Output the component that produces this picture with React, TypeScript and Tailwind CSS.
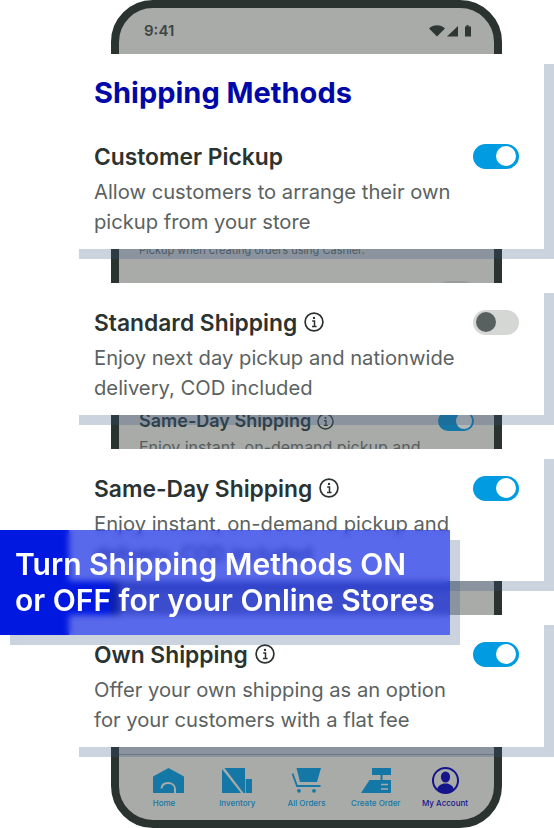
import React from 'react';

const NAV_BLUE = '#1477a5';
const SCREEN = '#a9aba9';

const InfoIcon: React.FC<{ className?: string }> = ({ className }) => (
  <svg viewBox="0 0 20 20" className={className} fill="none">
    <circle cx="10" cy="10" r="8.9" stroke="currentColor" strokeWidth="1.7" />
    <circle cx="10" cy="5.9" r="1.2" fill="currentColor" />
    <path d="M8.2 8.9H10.5V14.3M8 14.5H12.6" stroke="currentColor" strokeWidth="1.5" />
  </svg>
);

const Toggle: React.FC<{ on: boolean }> = ({ on }) =>
  on ? (
    <div className="flex h-[25px] w-[46px] shrink-0 items-center justify-end rounded-full bg-[#009be1] pr-[3px]">
      <div className="h-[20px] w-[20px] rounded-full bg-white" />
    </div>
  ) : (
    <div className="flex h-[25px] w-[46px] shrink-0 items-center rounded-full bg-[#d5d7d5] pl-[3px]">
      <div className="h-[20px] w-[20px] rounded-full bg-[#596160]" />
    </div>
  );

interface CardProps {
  title: string;
  info?: boolean;
  on: boolean;
  desc: string[];
  heading?: string;
}

const Card: React.FC<CardProps> = ({ title, info, on, desc, heading }) => (
  <div className={`bg-white pr-[25px] pl-[25px] pb-[12px] shadow-[10px_10px_0_0_rgba(55,86,128,0.26)] ${heading ? 'pt-[21px]' : 'pt-[25px]'}`}>
    {heading && (
      <h1 className="mb-[31px] text-[29px] leading-[36px] font-bold text-[#0008a8]">{heading}</h1>
    )}
    <div className="flex h-[28px] items-center justify-between">
      <div className="flex items-center gap-[7px]">
        <span className="pt-[1px] text-[22.8px] leading-[28px] font-semibold text-[#2b3331]">{title}</span>
        {info && <InfoIcon className="h-[20px] w-[20px] text-[#2b3331]" />}
      </div>
      <Toggle on={on} />
    </div>
    <p className="mt-[7px] text-[20.2px] leading-[30px] text-[#5b6261]">
      {desc[0]}
      <br />
      {desc[1]}
    </p>
  </div>
);

const PhoneRow: React.FC<{ title: string; on: boolean; desc: string; className?: string }> = ({ title, on, desc, className }) => (
  <div className={className}>
    <div className="flex h-[22px] items-center justify-between">
      <div className="flex items-center gap-[6px]">
        <span className="text-[18px] leading-[22px] font-semibold text-[#2f3c3f]">{title}</span>
        <InfoIcon className="h-[17px] w-[17px] text-[#2f3c3f]" />
      </div>
      {on ? (
        <div className="flex h-[20px] w-[36px] items-center justify-end rounded-full bg-[#1477a5] pr-[2px]">
          <div className="h-[16px] w-[16px] rounded-full bg-[#b4b8b8]" />
        </div>
      ) : (
        <div className="flex h-[20px] w-[36px] items-center rounded-full bg-[#989b99] pl-[2px]">
          <div className="h-[16px] w-[16px] rounded-full bg-[#555c5b]" />
        </div>
      )}
    </div>
    <p className="mt-[4px] text-[16px] leading-[23px] text-[#565e5d]">{desc}</p>
  </div>
);

const HomeIcon = () => (
  <svg width="31" height="25" viewBox="0 0 31 25" className="translate-x-[4px]">
    <path d="M0 8.5L15.5 0L31 8.5V25H0Z" fill={NAV_BLUE} />
    <path d="M8.5 20.5C9 16.5 12 15 15 15C19 15 22 17.5 22 21V25" fill="none" stroke={SCREEN} strokeWidth="2" />
  </svg>
);

const InventoryIcon = () => (
  <svg width="30" height="25" viewBox="0 0 30 25">
    <path d="M0 1V25H19Z" fill={NAV_BLUE} />
    <path d="M2.5 0H23V25H21.5Z" fill={NAV_BLUE} />
    <path d="M23.7 11H30V25H23.7Z" fill={NAV_BLUE} />
  </svg>
);

const CartIcon = () => (
  <svg width="29" height="25" viewBox="0 0 29 25">
    <path d="M4.5 0H29L25 14H8Z" fill={NAV_BLUE} />
    <path d="M0.5 5.5L5 18H28.5" fill="none" stroke={NAV_BLUE} strokeWidth="1.8" />
    <circle cx="7" cy="22.8" r="1.9" fill={NAV_BLUE} />
    <circle cx="22" cy="22.8" r="1.9" fill={NAV_BLUE} />
  </svg>
);

const RegisterIcon = () => (
  <svg width="30" height="25" viewBox="0 0 30 25">
    <path d="M11 0H30V7H21.5V12H30V25H0L8.5 12H19.5V7H11Z" fill={NAV_BLUE} />
    <path d="M20 16.5H27M20 21H27" stroke={SCREEN} strokeWidth="1.6" />
  </svg>
);

const AccountIcon = () => (
  <svg width="27" height="27" viewBox="0 0 27 27">
    <circle cx="13.5" cy="13.5" r="12.5" fill="none" stroke="#14148c" strokeWidth="2" />
    <ellipse cx="13.5" cy="10" rx="4.6" ry="5.6" fill="#14148c" />
    <path d="M5 22.5C6 18.5 9 17.5 11.5 16.5H15.5C18 17.5 21 18.5 22 22.5C19.5 25 16.5 25.6 13.5 25.6C10.5 25.6 7.5 25 5 22.5Z" fill="#14148c" />
  </svg>
);

const navItems = [
  { label: 'Home', icon: <HomeIcon />, color: 'text-[#1477a5]', shift: '' },
  { label: 'Inventory', icon: <InventoryIcon />, color: 'text-[#1477a5]', shift: 'translate-x-[3px]' },
  { label: 'All Orders', icon: <CartIcon />, color: 'text-[#1477a5]', shift: 'translate-x-[2px]' },
  { label: 'Create Order', icon: <RegisterIcon />, color: 'text-[#1477a5]', shift: 'translate-x-[1px]' },
  { label: 'My Account', icon: <AccountIcon />, color: 'text-[#14148c]', shift: '' },
];

const Phone = () => (
  <div className="absolute top-0 left-[111px] flex h-[828px] w-[391px] flex-col overflow-hidden rounded-[42px] border-[8px] border-[#2b3331] bg-[#a9aba9]">
    {/* Status bar */}
    <div className="flex h-[44px] shrink-0 items-center justify-between pt-[2px] pr-[23px] pl-[25px]">
      <span className="text-[15px] font-semibold text-[#3c4543]">9:41</span>
      <svg width="42" height="12" viewBox="0 0 42 12">
        <path d="M0 3.5C4.5 -0.8 11.5 -0.8 16 3.5L8 11.5Z" fill="#2f3735" />
        <path d="M18 11.5L29 1V11.5Z" fill="#2f3735" />
        <path d="M36 1.5H37.5V0H39.5V1.5H42V11.5H36Z" fill="#2f3735" />
      </svg>
    </div>
    {/* Screen list, mostly behind the cards */}
    <div className="flex-1 pt-[191px] pr-[20px] pl-[20px]">
      <p className="text-[11px] leading-[14px] text-[#565e5d]">Pickup when creating orders using Cashier.</p>
      <PhoneRow className="mt-[23px]" title="Standard Shipping" on={false} desc="Enjoy next day pickup and" />
      <PhoneRow className="mt-[81px]" title="Same-Day Shipping" on desc="Enjoy instant, on-demand pickup and" />
    </div>
    {/* Bottom nav */}
    <div className="flex h-[66px] shrink-0 justify-between border-t border-[#7d8284] pt-[13px] pr-[16px] pl-[12px]">
      {navItems.map((item) => (
        <div key={item.label} className={`flex w-[66px] flex-col items-center ${item.shift}`}>
          <div className="flex h-[25px] items-center">{item.icon}</div>
          <span className={`mt-[5px] text-[8px] leading-[10px] font-medium whitespace-nowrap ${item.color}`}>{item.label}</span>
        </div>
      ))}
    </div>
  </div>
);

export default function App() {
  return (
    <div className="relative h-[828px] w-[554px] overflow-hidden bg-white font-['Inter',sans-serif]">
      <Phone />

      {/* Cards */}
      <div className="relative ml-[69px] flex w-[475px] flex-col gap-[34px] pt-[54px]">
        <Card
          heading="Shipping Methods"
          title="Customer Pickup"
          on
          desc={['Allow customers to arrange their own', 'pickup from your store']}
        />
        <Card
          title="Standard Shipping"
          info
          on={false}
          desc={['Enjoy next day pickup and nationwide', 'delivery, COD included']}
        />
        <Card
          title="Same-Day Shipping"
          info
          on
          desc={['Enjoy instant, on-demand pickup and', 'delivery, COD included']}
        />
        <Card
          title="Own Shipping"
          info
          on
          desc={['Offer your own shipping as an option', 'for your customers with a flat fee']}
        />
      </div>

      {/* Solid blue behind the frosted banner */}
      <div className="absolute top-[530px] left-0 h-[105px] w-[69px] bg-[#0018e0]" />
      <div className="absolute top-[581px] left-[69px] h-[34px] w-[42px] bg-[#0018e0]" />

      {/* Banner */}
      <div className="absolute top-[530px] left-0 flex h-[105px] w-[450px] flex-col justify-center bg-[#0018e0]/65 pb-[1px] pl-[15px] shadow-[10px_10px_0_0_rgba(55,86,128,0.26)] backdrop-blur-[3px]">
        <p className="text-[30px] leading-[36px] font-semibold whitespace-nowrap text-white">
          Turn Shipping Methods ON
          <br />
          or OFF for your Online Stores
        </p>
      </div>
    </div>
  );
}
